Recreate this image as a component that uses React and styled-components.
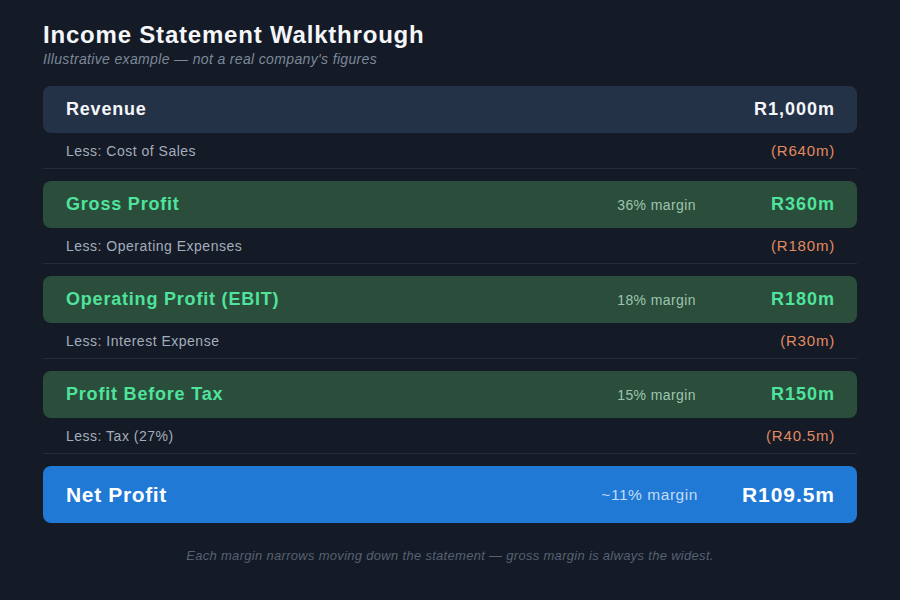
import React from "react";
import styled, { createGlobalStyle } from "styled-components";

const Global = createGlobalStyle`
  html, body { margin: 0; padding: 0; background: #141b26; }
  body { font-family: "Liberation Sans", Arial, sans-serif; }
`;

const Page = styled.div`
  width: 900px;
  height: 600px;
  box-sizing: border-box;
  padding: 20px 43px 0 43px;
  background: #141b26;
  display: flex;
  flex-direction: column;
`;

const Title = styled.h1`
  margin: 0;
  font-size: 24px;
  line-height: 29px;
  font-weight: 700;
  letter-spacing: 0.8px;
  color: #f4f6fa;
`;

const Subtitle = styled.p`
  margin: 2px 0 0 0;
  font-size: 14px;
  line-height: 17px;
  font-style: italic;
  letter-spacing: 0.35px;
  color: #7d8899;
`;

const Statement = styled.div`
  margin-top: 18px;
  display: flex;
  flex-direction: column;
`;

const Group = styled.div`
  display: flex;
  flex-direction: column;
  margin-bottom: 12px;
`;

const Bar = styled.div`
  display: flex;
  align-items: center;
  height: ${(p) => (p.$big ? 57 : 47)}px;
  padding: 0 22px 0 23px;
  border-radius: 8px;
  background: ${(p) => p.$bg};
`;

const Label = styled.div`
  flex: 1;
  font-size: ${(p) => (p.$big ? 21 : 18)}px;
  font-weight: 700;
  letter-spacing: ${(p) => (p.$big ? 0.65 : 0.8)}px;
  color: ${(p) => p.$color};
`;

const Margin = styled.div`
  font-size: ${(p) => (p.$big ? 15.5 : 14)}px;
  letter-spacing: ${(p) => (p.$big ? 0.55 : 0.4)}px;
  color: ${(p) => p.$color};
  margin-right: ${(p) => (p.$big ? 44 : 75)}px;
`;

const Amount = styled.div`
  font-size: ${(p) => (p.$big ? 21 : 18)}px;
  font-weight: 700;
  letter-spacing: ${(p) => (p.$big ? 0.95 : 1)}px;
  color: ${(p) => p.$color};
  text-align: right;
`;

const SubRow = styled.div`
  display: flex;
  align-items: center;
  justify-content: space-between;
  height: 35px;
  padding: 0 22px 0 23px;
  border-bottom: 1.5px solid #222c3b;
`;

const SubLabel = styled.span`
  font-size: 14px;
  letter-spacing: 0.5px;
  color: #a3adbd;
`;

const SubAmount = styled.span`
  font-size: 15px;
  letter-spacing: 0.8px;
  color: #e28a60;
`;

const Footer = styled.p`
  margin: 25px 0 0 0;
  text-align: center;
  font-size: 13px;
  font-style: italic;
  letter-spacing: 0.3px;
  color: #566173;
`;

const themes = {
  neutral: { bg: "#243248", label: "#f4f6fa", amount: "#f4f6fa", margin: "#a3adbd" },
  green: { bg: "#2b4d3b", label: "#4fe39c", amount: "#4fe39c", margin: "#9cc6ae" },
  blue: { bg: "#1f79d5", label: "#ffffff", amount: "#ffffff", margin: "#c3dbf5" },
};

const rows = [
  { label: "Revenue", amount: "R1,000m", theme: "neutral", less: "Less: Cost of Sales", lessAmt: "(R640m)" },
  { label: "Gross Profit", amount: "R360m", margin: "36% margin", theme: "green", less: "Less: Operating Expenses", lessAmt: "(R180m)" },
  { label: "Operating Profit (EBIT)", amount: "R180m", margin: "18% margin", theme: "green", less: "Less: Interest Expense", lessAmt: "(R30m)" },
  { label: "Profit Before Tax", amount: "R150m", margin: "15% margin", theme: "green", less: "Less: Tax (27%)", lessAmt: "(R40.5m)" },
];

export default function App() {
  const net = themes.blue;
  return (
    <>
      <Global />
      <Page>
        <Title>Income Statement Walkthrough</Title>
        <Subtitle>Illustrative example — not a real company's figures</Subtitle>
        <Statement>
          {rows.map((r) => {
            const t = themes[r.theme];
            return (
              <Group key={r.label}>
                <Bar $bg={t.bg}>
                  <Label $color={t.label}>{r.label}</Label>
                  {r.margin && <Margin $color={t.margin}>{r.margin}</Margin>}
                  <Amount $color={t.amount}>{r.amount}</Amount>
                </Bar>
                <SubRow>
                  <SubLabel>{r.less}</SubLabel>
                  <SubAmount>{r.lessAmt}</SubAmount>
                </SubRow>
              </Group>
            );
          })}
          <Bar $bg={net.bg} $big>
            <Label $big $color={net.label}>Net Profit</Label>
            <Margin $big $color={net.margin}>~11% margin</Margin>
            <Amount $big $color={net.amount}>R109.5m</Amount>
          </Bar>
        </Statement>
        <Footer>
          Each margin narrows moving down the statement — gross margin is always the widest.
        </Footer>
      </Page>
    </>
  );
}
